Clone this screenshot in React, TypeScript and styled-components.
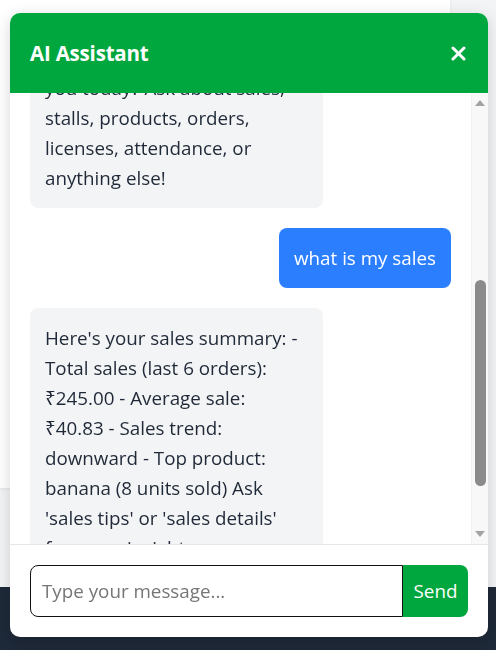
import React, { useCallback, useLayoutEffect, useRef, useState } from "react";
import styled, { createGlobalStyle } from "styled-components";

const GlobalStyle = createGlobalStyle`
  html, body { margin: 0; padding: 0; }
  body {
    background: #f3f4f6;
    font-family: "Open Sans", "Noto Sans", "Liberation Sans", sans-serif;
    overflow: hidden;
  }
  * { box-sizing: border-box; }
`;

const GREEN = "#00a63e";
const FONT_SIZE = "18.8px";

const Page = styled.div`
  display: flex;
  flex-direction: column;
  min-height: 100vh;
`;

const Top = styled.div`
  display: flex;
  height: 587px;
  align-items: flex-start;
`;

const MainCard = styled.main`
  width: 450px;
  height: 488px;
  background: #ffffff;
  box-shadow: 0 1px 3px rgba(0, 0, 0, 0.08);
`;

const Footer = styled.footer`
  flex: 1;
  min-height: 63px;
  background: #1e2939;
`;

const Panel = styled.section`
  position: fixed;
  right: 8px;
  bottom: 13px;
  width: 478px;
  height: 624px;
  background: #ffffff;
  border-radius: 10px;
  overflow: hidden;
  display: flex;
  flex-direction: column;
  box-shadow: 0 4px 16px rgba(0, 0, 0, 0.16);
`;

const Header = styled.header`
  height: 80px;
  flex: none;
  background: ${GREEN};
  display: flex;
  align-items: center;
  justify-content: space-between;
  padding: 0 20px;
`;

const Title = styled.h3`
  margin: 0;
  color: #ffffff;
  font-size: 20.5px;
  font-weight: 700;
  letter-spacing: -0.2px;
`;

const CloseButton = styled.button`
  width: 24px;
  height: 24px;
  border: none;
  background: transparent;
  padding: 0;
  margin-right: -2px;
  display: flex;
  align-items: center;
  justify-content: center;
  cursor: pointer;
`;

const Body = styled.div`
  flex: 1;
  min-height: 0;
  display: flex;
  border-bottom: 1px solid #e5e7eb;
`;

const Messages = styled.div`
  position: relative;
  flex: 1;
  min-width: 0;
  overflow-y: auto;
  scrollbar-width: none;
  padding: 20px;
  display: flex;
  flex-direction: column;
  gap: 20px;
  &::-webkit-scrollbar {
    display: none;
  }
`;

const Rail = styled.div`
  width: 17px;
  flex: none;
  display: flex;
  flex-direction: column;
  background: #f8f8f8;
  border-left: 1px solid #f1f1f1;
`;

const RailButton = styled.div`
  height: 20px;
  flex: none;
  display: flex;
  align-items: center;
  justify-content: center;
`;

const Track = styled.div`
  flex: 1;
  min-height: 0;
  display: flex;
  flex-direction: column;
  align-items: center;
`;

const Thumb = styled.div`
  width: 11px;
  flex: none;
  border-radius: 6px;
  background: #8b8b8b;
`;

const Bubble = styled.div<{ $user?: boolean }>`
  flex: none;
  max-width: 69.6%;
  align-self: ${(p) => (p.$user ? "flex-end" : "flex-start")};
  padding: 15px ${(p) => (p.$user ? "15px" : "20px")} 15px 15px;
  border-radius: 8px;
  background: ${(p) => (p.$user ? "#2b7fff" : "#f3f4f6")};
  color: ${(p) => (p.$user ? "#ffffff" : "#1f2937")};
  font-size: ${FONT_SIZE};
  line-height: 30px;
`;

const InputBar = styled.form`
  flex: none;
  display: flex;
  padding: 20px;
`;

const TextInput = styled.input`
  flex: 1;
  min-width: 0;
  height: 52px;
  border: 1px solid #111111;
  border-radius: 8px 0 0 8px;
  padding: 0 11px;
  font-family: inherit;
  font-size: ${FONT_SIZE};
  color: #1f2937;
  outline: none;
  &::placeholder {
    color: #767676;
  }
`;

const SendButton = styled.button`
  width: 65px;
  height: 52px;
  border: none;
  border-radius: 0 8px 8px 0;
  background: ${GREEN};
  color: #ffffff;
  font-family: inherit;
  font-size: ${FONT_SIZE};
  padding: 0;
  cursor: pointer;
`;

type Msg = { from: "bot" | "user"; text: string };

const messages: Msg[] = [
  {
    from: "bot",
    text:
      "Welcome back! Your stall dashboard is ready. You have 3 pending orders and a license renewal due soon.",
  },
  { from: "user", text: "hello" },
  {
    from: "bot",
    text:
      "Namaste! I'm your assistant. Hello again! How can I help you today? Ask about sales, stalls, products, orders, licenses, attendance, or anything else!",
  },
  { from: "user", text: "what is my sales" },
  {
    from: "bot",
    text:
      "Here's your sales summary: - Total sales (last 6 orders): ₹245.00 - Average sale: ₹40.83 - Sales trend: downward - Top product: banana (8 units sold) Ask 'sales tips' or 'sales details' for more insights on your daily numbers.",
  },
];

export default function App() {
  const listRef = useRef<HTMLDivElement>(null);
  const lastRef = useRef<HTMLDivElement>(null);
  const [thumb, setThumb] = useState({ top: 0, height: 0 });

  const measure = useCallback(() => {
    const list = listRef.current;
    if (!list) return;
    const track = list.clientHeight - 40;
    const total = list.scrollHeight;
    setThumb({
      top: (list.scrollTop / total) * track,
      height: (list.clientHeight / total) * track,
    });
  }, []);

  useLayoutEffect(() => {
    const list = listRef.current;
    const last = lastRef.current;
    if (list && last) {
      list.scrollTop = last.offsetTop - 215;
    }
    measure();
  }, [measure]);

  return (
    <>
      <GlobalStyle />
      <Page>
        <Top>
          <MainCard />
        </Top>
        <Footer />
      </Page>
      <Panel>
        <Header>
          <Title>AI Assistant</Title>
          <CloseButton aria-label="Close">
            <svg width="15" height="15" viewBox="0 0 15 15">
              <path
                d="M2 2 L13 13 M13 2 L2 13"
                stroke="#ffffff"
                strokeWidth="3"
                strokeLinecap="round"
              />
            </svg>
          </CloseButton>
        </Header>
        <Body>
          <Messages ref={listRef} onScroll={measure}>
            {messages.map((m, i) => (
              <Bubble
                key={i}
                $user={m.from === "user"}
                ref={i === messages.length - 1 ? lastRef : undefined}
              >
                {m.text}
              </Bubble>
            ))}
          </Messages>
          <Rail aria-hidden="true">
            <RailButton>
              <svg width="10" height="6" viewBox="0 0 10 6">
                <polygon points="0,6 5,0 10,6" fill="#a3a3a3" />
              </svg>
            </RailButton>
            <Track>
              <Thumb style={{ marginTop: thumb.top, height: thumb.height }} />
            </Track>
            <RailButton>
              <svg width="10" height="6" viewBox="0 0 10 6">
                <polygon points="0,0 10,0 5,6" fill="#a3a3a3" />
              </svg>
            </RailButton>
          </Rail>
        </Body>
        <InputBar onSubmit={(e) => e.preventDefault()}>
          <TextInput type="text" placeholder="Type your message..." />
          <SendButton type="submit">Send</SendButton>
        </InputBar>
      </Panel>
    </>
  );
}
